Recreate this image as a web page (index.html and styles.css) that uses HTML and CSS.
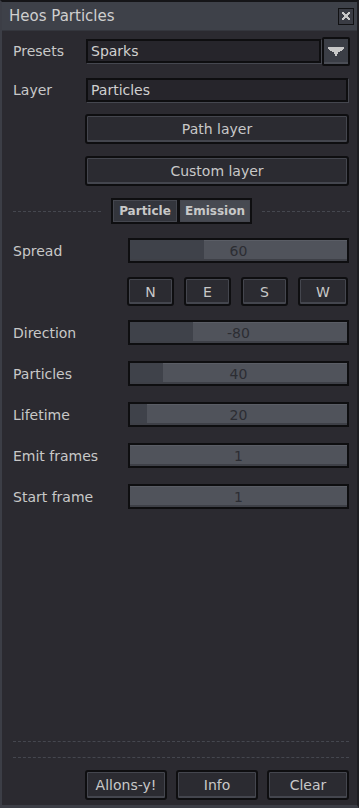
FILE: index.html
```html
<!DOCTYPE html>
<html lang="en">
<head>
    <meta charset="UTF-8">
    <meta name="viewport" content="width=device-width, initial-scale=1.0">
    <title>Heos Particles</title>
    <link rel="stylesheet" href="styles.css">
</head>
<body>

    <div class="window">
        <!-- Title bar -->
        <div class="titlebar">
            <span class="title">Heos Particles</span>
            <div class="close">
                <svg width="10" height="10" viewBox="0 0 10 10">
                    <path d="M1 1h2v1h1v1h2v-1h1v-1h2v2h-1v1h-1v2h1v1h1v2h-2v-1h-1v-1h-2v1h-1v1h-2v-2h1v-1h1v-2h-1v-1h-1z" fill="#c8c8c8"/>
                </svg>
            </div>
        </div>

        <div class="content">
            <!-- Presets / layer -->
            <div class="row presets">
                <span class="label">Presets</span>
                <div class="field">Sparks</div>
                <div class="drop">
                    <svg width="16" height="9" viewBox="0 0 16 9">
                        <path d="M0 0h16v2h-1v1h-1v1h-2v1h-2v2h-1v2h-2v-2h-1v-2h-2v-1h-2v-1h-1v-1h-1z" fill="#c8c8c8"/>
                    </svg>
                </div>
            </div>
            <div class="row layer">
                <span class="label">Layer</span>
                <div class="field wide">Particles</div>
            </div>

            <div class="btn block path">Path layer</div>
            <div class="btn block custom">Custom layer</div>

            <!-- Tabs -->
            <div class="tabs">
                <div class="dash"></div>
                <div class="tab">Particle</div>
                <div class="tab active">Emission</div>
                <div class="dash"></div>
            </div>

            <div class="row slider-row first">
                <span class="label">Spread</span>
                <div class="slider"><div class="fill" style="width: 34%"></div><span>60</span></div>
            </div>

            <div class="compass">
                <div class="btn dir">N</div>
                <div class="btn dir">E</div>
                <div class="btn dir">S</div>
                <div class="btn dir">W</div>
            </div>

            <div class="row slider-row first">
                <span class="label">Direction</span>
                <div class="slider"><div class="fill" style="width: 29%"></div><span>-80</span></div>
            </div>
            <div class="row slider-row">
                <span class="label">Particles</span>
                <div class="slider"><div class="fill" style="width: 15%"></div><span>40</span></div>
            </div>
            <div class="row slider-row">
                <span class="label">Lifetime</span>
                <div class="slider"><div class="fill" style="width: 8%"></div><span>20</span></div>
            </div>
            <div class="row slider-row">
                <span class="label">Emit frames</span>
                <div class="slider"><span>1</span></div>
            </div>
            <div class="row slider-row">
                <span class="label">Start frame</span>
                <div class="slider"><span>1</span></div>
            </div>

            <div class="spacer"></div>

            <!-- Footer -->
            <div class="dash full"></div>
            <div class="dash full second"></div>
            <div class="footer">
                <div class="btn foot allons">Allons-y!</div>
                <div class="btn foot info">Info</div>
                <div class="btn foot clear">Clear</div>
            </div>
        </div>
    </div>

</body>
</html>
```

FILE: styles.css
```css
body {
    margin: 0;
    background-color: #2b2a30;
    color: #c8c8c8;
    font-family: "DejaVu Sans", sans-serif;
    font-size: 14px;
}

.window {
    width: 359px;
    height: 808px;
    box-sizing: border-box;
    border-top: 2px solid #151518;
    border-left: 2px solid #3c3e46;
    border-bottom: 3px solid #3c3e46;
    border-right: 2px solid #1e1e22;
    display: flex;
    flex-direction: column;
}

/* Title bar */
.titlebar {
    height: 28px;
    background-color: #3e4149;
    border-bottom: 1px solid #34363d;
    display: flex;
    align-items: center;
    justify-content: space-between;
    padding: 0 3px 0 7px;
}

.title {
    font-size: 15px;
    color: #cfcfcf;
}

.close {
    width: 14px;
    height: 15px;
    background-color: #3a3c44;
    border: 1px solid #111113;
    display: flex;
    align-items: center;
    justify-content: center;
}

.content {
    flex: 1;
    display: flex;
    flex-direction: column;
    padding: 0 7px 0 11px;
}

.row {
    display: flex;
    align-items: center;
}

.label {
    width: 73px;
    flex-shrink: 0;
}

/* Text fields */
.field {
    height: 20px;
    flex: 1;
    background-color: #26252b;
    border: 2px solid #0e0e10;
    box-shadow: 1px 1px 0 #45474f;
    display: flex;
    align-items: center;
    padding-left: 3px;
    color: #d0d0d0;
}

.presets {
    margin-top: 5px;
    height: 30px;
}

.drop {
    width: 24px;
    height: 25px;
    margin-left: 1px;
    background-color: #3b3e46;
    border: 2px solid #0e0e10;
    border-radius: 2px;
    box-shadow: inset 0 -2px 0 #4a4d55;
    display: flex;
    align-items: center;
    justify-content: center;
}

.layer {
    margin-top: 12px;
    height: 24px;
}

.field.wide {
    margin-right: 2px;
}

/* Buttons */
.btn {
    background-color: #2b2b31;
    border: 2px solid #0e0e10;
    border-radius: 3px;
    box-shadow: inset 0 0 0 1px #44464e, inset 0 -2px 0 #44464e;
    display: flex;
    align-items: center;
    justify-content: center;
    box-sizing: border-box;
}

.block {
    margin-left: 72px;
    margin-right: 1px;
    height: 30px;
}

.path {
    margin-top: 12px;
}

.custom {
    margin-top: 12px;
}

/* Tabs */
.tabs {
    margin-top: 12px;
    height: 26px;
    display: flex;
    align-items: center;
}

.dash {
    flex: 1;
    border-top: 1px dashed #45474f;
}

.tabs .dash {
    margin-top: 1px;
}

.tabs .dash:first-child {
    margin-right: 10px;
}

.tabs .dash:last-child {
    margin-left: 10px;
}

.tab {
    width: 68px;
    height: 26px;
    box-sizing: border-box;
    border: 2px solid #0e0e10;
    background-color: #33353c;
    box-shadow: inset 0 0 0 1px #45474f;
    font-size: 12px;
    font-weight: bold;
    display: flex;
    align-items: center;
    justify-content: center;
}

.tab.active {
    width: 74px;
    background-color: #474a52;
    margin-left: -1px;
}

/* Sliders */
.slider-row {
    margin-top: 16px;
    height: 25px;
}

.slider-row.first {
    margin-top: 14px;
}

.slider-row .label {
    width: 115px;
}

.slider {
    flex: 1;
    height: 25px;
    margin-right: 1px;
    box-sizing: border-box;
    border: 2px solid #0e0e10;
    background-color: #50535b;
    box-shadow: inset 0 1px 0 #5a5d65, inset 0 -2px 0 #3e4047;
    position: relative;
    display: flex;
    align-items: center;
    justify-content: center;
}

.slider .fill {
    position: absolute;
    left: 0;
    top: 0;
    bottom: 2px;
    background-color: #3f424a;
}

.slider span {
    position: relative;
    color: #2c2d33;
}

/* Direction buttons */
.compass {
    margin-top: 14px;
    margin-left: 114px;
    margin-right: 1px;
    height: 29px;
    display: flex;
    gap: 10px;
}

.dir {
    width: 47px;
}

.compass .dir:last-child {
    width: 50px;
}

.spacer {
    flex: 1;
}

.dash.full {
    flex: none;
    margin-right: 1px;
}

.dash.second {
    margin-top: 15px;
}

/* Footer */
.footer {
    margin-top: 12px;
    margin-bottom: 5px;
    margin-left: 72px;
    margin-right: 1px;
    height: 30px;
    display: flex;
    gap: 9px;
}

.foot {
    flex: 1;
}
```
